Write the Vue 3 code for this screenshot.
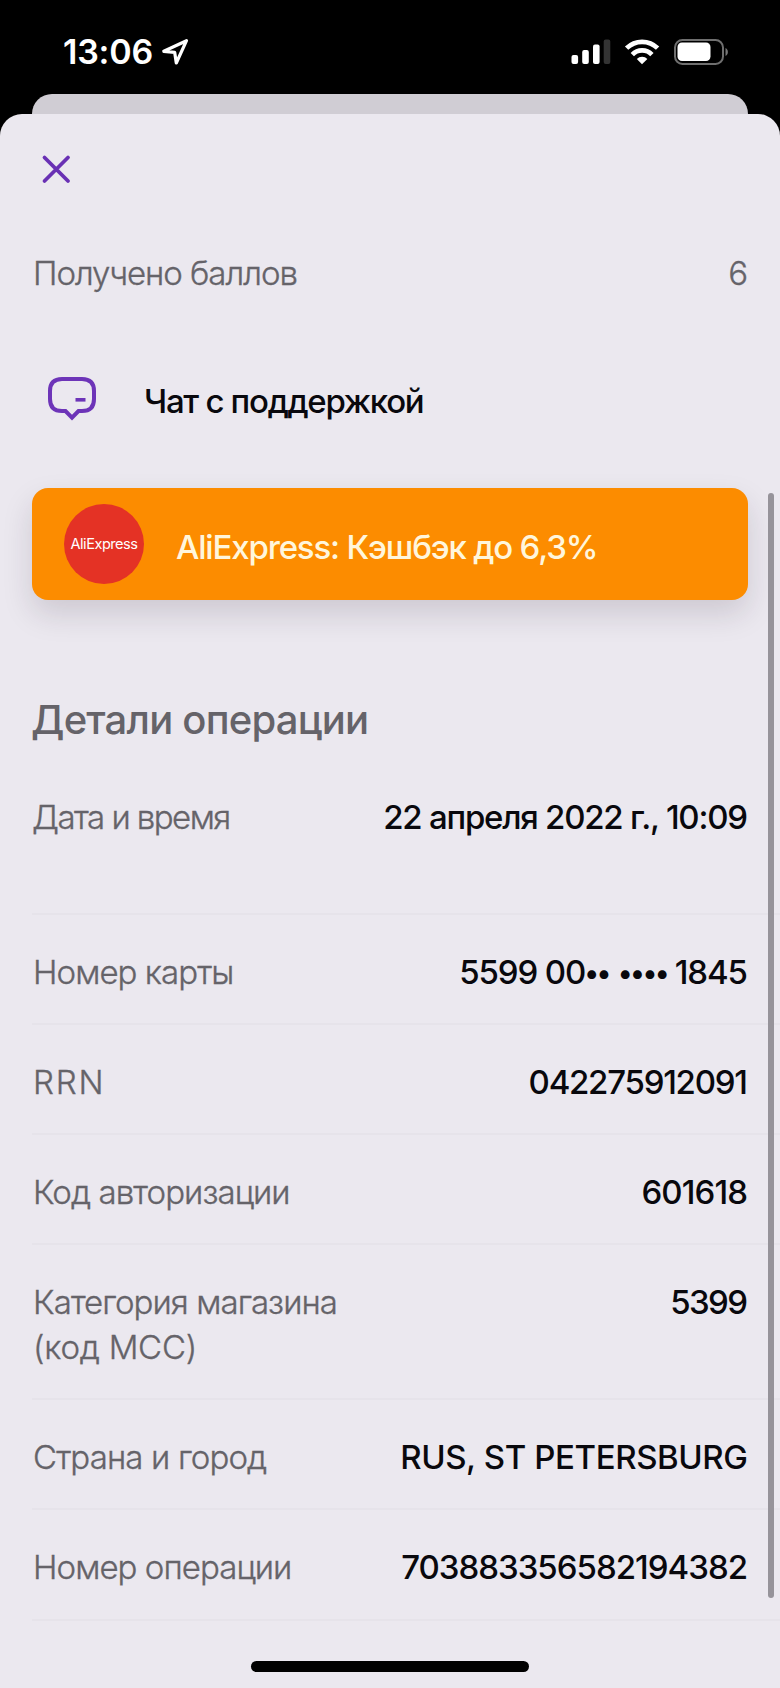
<script setup>
const rows = [
  { id: 'date', label: ['Дата и время'], value: '22 апреля 2022 г., 10:09' },
  { id: 'card', label: ['Номер карты'], value: ['5599 00', '•• ••••', ' 1845'] },
  { id: 'rrn', label: ['RRN'], value: '042275912091' },
  { id: 'auth', label: ['Код авторизации'], value: '601618' },
  { id: 'mcc', label: ['Категория магазина', '(код MCC)'], value: '5399' },
  { id: 'city', label: ['Страна и город'], value: 'RUS, ST PETERSBURG' },
  { id: 'op', label: ['Номер операции'], value: '703883356582194382' },
]
</script>

<template>
  <div class="screen">
    <header class="status">
      <div class="clock">
        <span class="time">13:06</span>
        <svg class="arrow" width="28" height="28" viewBox="0 0 28 28">
          <path d="M25.500 2.700 2.800 13.300l10.900 1.100L15.300 25z" fill="none" stroke="#fff" stroke-width="3.200" stroke-linejoin="round" />
        </svg>
      </div>
      <svg class="indicators" width="160" height="30" viewBox="0 0 160 30">
        <g fill="#fff">
          <rect x="2.5" y="18" width="6.6" height="9" rx="2" />
          <rect x="13.2" y="13" width="6.6" height="14" rx="2" />
          <rect x="24" y="7.5" width="6.6" height="19.500" rx="2" />
          <rect x="34.700" y="2.500" width="6.600" height="24.500" rx="2" fill="#343434" />
        </g>
        <g fill="none" stroke="#fff" stroke-width="4.700">
          <path d="M57.600 11.200a22 22 0 0 1 31 0" />
          <path d="M63.300 17.600a13.700 13.700 0 0 1 19.600 0" />
        </g>
        <path d="M73 27.300 67.800 21.900a7.400 7.400 0 0 1 10.600 0z" fill="#fff" />
        <rect x="106" y="3" width="48" height="24" rx="7.500" fill="none" stroke="#6f6f6f" stroke-width="2" />
        <rect x="108.500" y="5.500" width="33" height="18.500" rx="4.500" fill="#fff" />
        <path d="M156.500 11c3.200 1.500 3.200 6.500 0 8z" fill="#777" />
      </svg>
    </header>
    <div class="behind"></div>
    <main class="sheet">
      <svg class="close" width="32" height="32" viewBox="0 0 32 32">
        <path d="M4.500 4.500 28 28M28 4.500 4.500 28" stroke="#6930b4" stroke-width="3.800" stroke-linecap="round" />
      </svg>
      <div class="points">
        <span>Получено баллов</span><span class="amount">6</span>
      </div>
      <div class="chat">
        <svg width="52" height="48" viewBox="0 0 52 48">
          <path d="M16 4H36Q48 4 48 16V24Q48 36 36 36H32.500L26 42.600 19.500 36H16Q4 36 4 24V16Q4 4 16 4Z" fill="none" stroke="#6d34b8" stroke-width="4" />
          <path d="M29.500 24.800h10" stroke="#6d34b8" stroke-width="3.600" />
        </svg>
        <span>Чат с поддержкой</span>
      </div>
      <div class="promo">
        <div class="brand">AliExpress</div>
        <span class="offer">AliExpress: Кэшбэк до 6,3%</span>
      </div>
      <h1>Детали операции</h1>
      <section class="rows">
        <div v-for="r in rows" :key="r.id" class="row" :class="r.id">
          <div class="label"><div v-for="t in r.label" :key="t">{{ t }}</div></div>
          <span v-if="r.id === 'card'" class="value">{{ r.value[0] }}<span class="mask">{{ r.value[1] }}</span>{{ r.value[2] }}</span>
          <span v-else class="value">{{ r.value }}</span>
        </div>
      </section>
      <div class="scrollbar"></div>
      <div class="home"></div>
    </main>
  </div>
</template>

<style>
html, body { margin: 0; background: #000; }
</style>
<style scoped>
.screen { width: 780px; height: 1688px; background: #000; position: relative; overflow: hidden; font-family: Inter, "Liberation Sans", sans-serif; font-size: 33px; line-height: 44px; color: #09080d; white-space: nowrap; display: flex; flex-direction: column; }
.status { height: 94px; flex: none; display: flex; justify-content: space-between; align-items: flex-start; padding: 0 51px 0 63px; box-sizing: border-box; }
.clock { display: flex; margin-top: 30px; }
.time { color: #fff; font-weight: 600; font-size: 34px; letter-spacing: -0.2px; }
.arrow { margin: 8px 0 0 8px; }
.indicators { margin-top: 37px; }
.behind { height: 40px; margin: 0 32px; background: #d0cdd4; border-radius: 20px 20px 0 0; flex: none; }
.sheet { margin-top: -20px; flex: 1; background: #ebe8ef; border-radius: 22px 22px 0 0; position: relative; display: flex; flex-direction: column; }
.close { margin: 39px 0 0 40px; }
.points { display: flex; justify-content: space-between; margin: 66px 32px 0 33px; color: #656369; font-weight: 300; -webkit-text-stroke: 0.35px #656369; letter-spacing: -1.03px; }
.amount { letter-spacing: 0; }
.chat { display: flex; align-items: flex-start; margin: 80px 0 0 46px; height: 48px; font-weight: 500; letter-spacing: -1.3px; }
.chat span { margin: 4px 0 0 46px; }
.promo { margin: 65px 32px 0; height: 112px; border-radius: 16px; background: #fc8c00; box-shadow: 0 14px 30px rgba(40, 30, 50, .15); display: flex; align-items: center; padding-left: 32px; box-sizing: border-box; color: #fff6dc; font-weight: 500; letter-spacing: -1.17px; }
.offer { padding-top: 6px; }
.brand { width: 80px; height: 80px; border-radius: 50%; background: #e43225; font-size: 14.6px; color: #fff; display: flex; align-items: center; justify-content: center; font-weight: 400; margin-right: 32px; letter-spacing: -0.5px; }
h1 { font-size: 40px; line-height: 52px; margin: 94px 0 0 31px; font-weight: 500; color: #656369; letter-spacing: -0.78px; }
.rows { margin: 48px 0 0 32px; }
.row { display: flex; justify-content: space-between; align-items: flex-start; padding: 35px 32px 29px 0; border-bottom: 2px solid #e6e3ea; }
.row.date { padding-top: 1px; padding-bottom: 74px; }
.row.mcc { padding-bottom: 30px; }
.row.op { padding-bottom: 30px; }
.label { color: #656369; font-weight: 300; -webkit-text-stroke: 0.35px #656369; letter-spacing: -0.93px; padding-left: 1px; }
.date .label { letter-spacing: -1.55px; padding-left: 0; }
.rrn .label { letter-spacing: 1.8px; }
.city .label { letter-spacing: -0.85px; }
.mcc .label div + div { letter-spacing: -0.25px; margin-top: 1px; margin-bottom: -1px; }
.value { --ls: -1.25px; font-weight: 500; letter-spacing: var(--ls); margin-right: calc(-1 * var(--ls)); }
.card .value { --ls: -1.1px; }
.auth .value { --ls: -0.9px; }
.mcc .value { --ls: -1.6px; }
.city .value { --ls: -0.4px; }
.op .value { --ls: -1px; }
.mask { font-size: 28px; line-height: 1; letter-spacing: -2.6px; word-spacing: 4px; margin-left: -1px; position: relative; top: -1px; }
.scrollbar { position: absolute; left: 768px; top: 379px; width: 6px; height: 1105px; border-radius: 3px; background: #96939a; }
.home { position: absolute; left: 251px; top: 1547px; width: 278px; height: 11px; border-radius: 6px; background: #000; }
</style>
